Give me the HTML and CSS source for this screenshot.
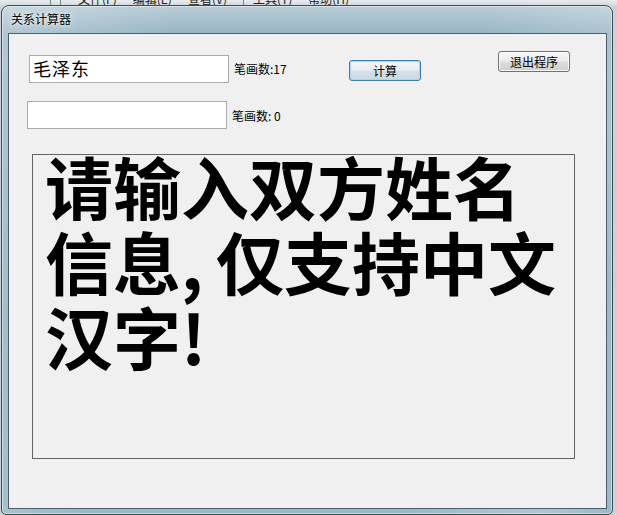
FILE: index.html
```html
<!DOCTYPE html>
<html lang="zh-CN">
<head>
<meta charset="utf-8">
<title>关系计算器</title>
<link rel="stylesheet" href="styles.css">
</head>
<body>
<div class="desk">
  <div class="bgmenu">
    <span class="sep"></span><span class="sep"></span>
    <span class="mi m1">文件(F)</span>
    <span class="mi">编辑(E)</span>
    <span class="mi">查看(V)</span>
    <span class="sep"></span>
    <span class="mi">工具(T)</span>
    <span class="mi">帮助(H)</span>
  </div>
  <div class="window">
    <div class="titlebar">关系计算器</div>
    <div class="client">
      <div class="row row1">
        <div class="textbox tb1">毛泽东</div>
        <div class="label lb1">笔画数:17</div>
        <button class="btn btn-focus">计算</button>
        <button class="btn btn-exit">退出程序</button>
      </div>
      <div class="row row2">
        <div class="textbox tb2"></div>
        <div class="label lb2">笔画数: 0</div>
      </div>
      <div class="msgbox">
        <p class="msg">请输入双方姓名信息<span class="comma">,</span>仅支持中文汉字!</p>
      </div>
    </div>
  </div>
</div>
</body>
</html>
```

FILE: styles.css
```css
html, body {
  margin: 0;
  padding: 0;
}
body {
  width: 617px;
  height: 515px;
  overflow: hidden;
  font-family: "Noto Sans CJK SC", "Noto Sans", sans-serif;
  background: #cfd6da;
}
.desk {
  position: relative;
  width: 617px;
  height: 515px;
  overflow: hidden;
  background: linear-gradient(to right, #c9d2d8, #dfe4e7 60%, #c8d3d9);
}
.bgmenu {
  display: flex;
  align-items: flex-end;
  height: 6px;
  overflow: hidden;
  background: linear-gradient(#e9ecee, #cfd6db);
  font-size: 12px;
  line-height: 14px;
  color: #222;
  padding-left: 50px;
}
.bgmenu .mi {
  margin-top: -9px;
  margin-right: 16px;
  white-space: nowrap;
}
.bgmenu .m1 {
  margin-left: 8px;
}
.bgmenu .sep {
  display: inline-block;
  width: 1px;
  height: 6px;
  background: #7c8790;
  margin-right: 9px;
}
.window {
  position: absolute;
  left: 1px;
  top: 5px;
  width: 612px;
  height: 510px;
  box-sizing: border-box;
  border: 1px solid #3d4b55;
  border-radius: 8px 8px 5px 5px;
  background:
    linear-gradient(100deg, rgba(255,255,255,0.25) 0%, rgba(255,255,255,0) 25%, rgba(255,255,255,0) 70%, rgba(255,255,255,0.2) 90%, rgba(255,255,255,0) 100%),
    linear-gradient(#b8cdd8 0px, #98b5c4 28px, #8fb0c0 60%, #9bb8c6 100%);
  box-shadow: inset 0 0 0 1px rgba(255,255,255,0.45);
  padding: 0 5px 5px 6px;
  display: flex;
  flex-direction: column;
}
.titlebar {
  height: 27px;
  flex: none;
  font-size: 12px;
  line-height: 25px;
  padding-left: 3px;
  color: #000;
  text-shadow: 0 0 6px rgba(255,255,255,0.9), 0 0 3px rgba(255,255,255,0.9);
}
.client {
  flex: 1;
  border: 1px solid #4c5e6a;
  background: #f0f0f0;
  box-sizing: border-box;
}
.row {
  display: flex;
  align-items: flex-start;
}
.row1 {
  padding-top: 17px;
}
.textbox {
  box-sizing: border-box;
  width: 200px;
  height: 28px;
  background: #fff;
  border: 1px solid #a9a9a9;
}
.tb1 {
  margin-left: 20px;
  margin-top: 4px;
  font-size: 18px;
  line-height: 24px;
  padding-left: 3px;
  letter-spacing: 1px;
  color: #000;
}
.tb2 {
  margin-left: 18px;
}
.label {
  font-size: 12px;
  line-height: 14px;
  color: #000;
  width: 115px;
  margin-left: 5px;
  white-space: nowrap;
}
.lb1 {
  margin-top: 11px;
}
.lb2 {
  margin-top: 8px;
}
.btn {
  box-sizing: border-box;
  width: 72px;
  height: 21px;
  padding: 0;
  font-family: "Noto Sans CJK SC", sans-serif;
  font-size: 12px;
  line-height: 17px;
  color: #000;
  border-radius: 3px;
  border: 1px solid #707070;
  background: linear-gradient(#f6f6f6 0%, #ebebeb 48%, #dddddd 52%, #cfcfcf 100%);
  box-shadow: inset 0 0 0 1px rgba(255,255,255,0.8);
}
.btn-focus {
  margin-top: 9px;
  border-color: #3c7fb1;
  background: linear-gradient(#f4f7f9 0%, #e8eef2 48%, #d7e2ea 52%, #c9d8e3 100%);
  box-shadow: inset 0 0 0 1px #a6d8f2;
}
.btn-exit {
  margin-left: 77px;
}
.row2 {
  margin-top: 18px;
}
.msgbox {
  margin-top: 25px;
  margin-left: 23px;
  width: 543px;
  height: 305px;
  box-sizing: border-box;
  border: 1px solid #646464;
  padding: 0 0 0 12px;
  overflow: hidden;
}
.msg {
  margin: -7px 0 0 0;
  font-size: 68px;
  line-height: 75px;
  font-weight: 700;
  color: #000;
}
.comma {
  display: inline-block;
  width: 35px;
}
```
